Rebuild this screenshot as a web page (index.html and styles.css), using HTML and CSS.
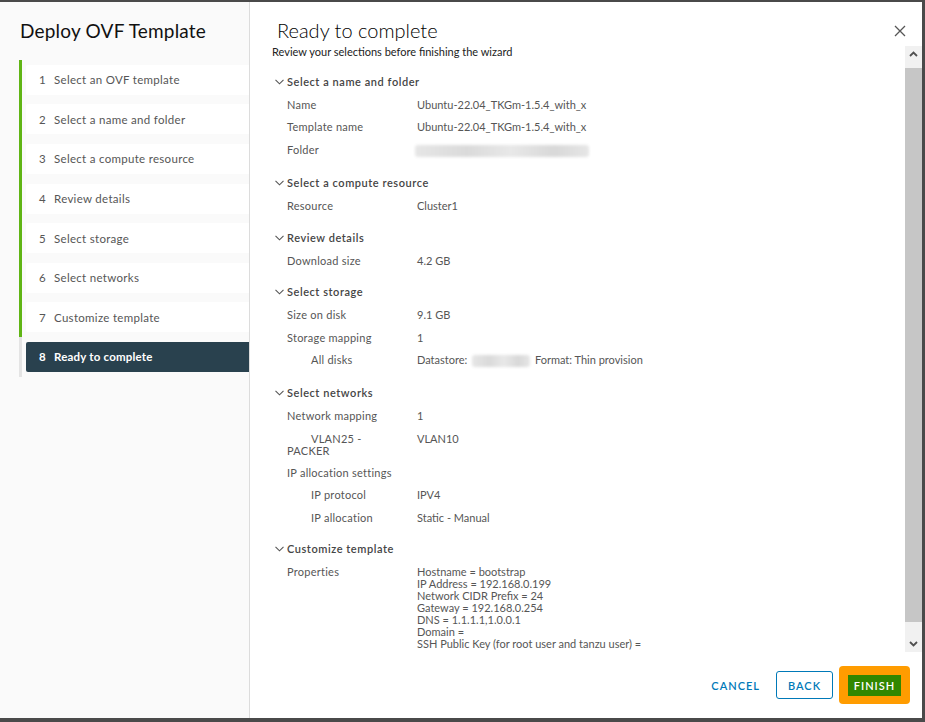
FILE: index.html
```html
<!DOCTYPE html>
<html>
<head>
<meta charset="utf-8">
<link rel="stylesheet" href="styles.css">
</head>
<body>
<div class="dialog">
  <aside class="sidebar">
    <h1 class="side-title">Deploy OVF Template</h1>
    <ol class="steps">
      <li class="step done"><div class="step-box"><span class="num">1</span>Select an OVF template</div></li>
      <li class="step done"><div class="step-box"><span class="num">2</span>Select a name and folder</div></li>
      <li class="step done"><div class="step-box"><span class="num">3</span>Select a compute resource</div></li>
      <li class="step done"><div class="step-box"><span class="num">4</span>Review details</div></li>
      <li class="step done"><div class="step-box"><span class="num">5</span>Select storage</div></li>
      <li class="step done"><div class="step-box"><span class="num">6</span>Select networks</div></li>
      <li class="step done"><div class="step-box"><span class="num">7</span>Customize template</div></li>
      <li class="step current"><div class="step-box active"><span class="num">8</span>Ready to complete</div></li>
    </ol>
  </aside>
  <main class="panel">
    <header class="panel-head">
      <h2 class="panel-title">Ready to complete</h2>
      <button class="close" aria-label="Close">
        <svg width="12" height="12" viewBox="0 0 12 12"><path d="M1 1 L11 11 M11 1 L1 11" stroke="#565656" stroke-width="1.3" fill="none"/></svg>
      </button>
    </header>
    <div class="panel-body">
      <div class="content">
        <p class="subtitle">Review your selections before finishing the wizard</p>

        <section class="sec">
          <div class="sec-head"><svg class="chev" width="9" height="6" viewBox="0 0 9 6"><path d="M0.5 0.8 L4.5 4.8 L8.5 0.8" stroke="#565656" stroke-width="1.1" fill="none"/></svg>Select a name and folder</div>
          <div class="row"><span class="lbl">Name</span><span class="val">Ubuntu-22.04_TKGm-1.5.4_with_x</span></div>
          <div class="row"><span class="lbl">Template name</span><span class="val">Ubuntu-22.04_TKGm-1.5.4_with_x</span></div>
          <div class="row"><span class="lbl">Folder</span><span class="val"><span class="blur blur-folder"></span></span></div>
        </section>

        <section class="sec">
          <div class="sec-head"><svg class="chev" width="9" height="6" viewBox="0 0 9 6"><path d="M0.5 0.8 L4.5 4.8 L8.5 0.8" stroke="#565656" stroke-width="1.1" fill="none"/></svg>Select a compute resource</div>
          <div class="row"><span class="lbl">Resource</span><span class="val">Cluster1</span></div>
        </section>

        <section class="sec">
          <div class="sec-head"><svg class="chev" width="9" height="6" viewBox="0 0 9 6"><path d="M0.5 0.8 L4.5 4.8 L8.5 0.8" stroke="#565656" stroke-width="1.1" fill="none"/></svg>Review details</div>
          <div class="row"><span class="lbl">Download size</span><span class="val">4.2 GB</span></div>
        </section>

        <section class="sec">
          <div class="sec-head"><svg class="chev" width="9" height="6" viewBox="0 0 9 6"><path d="M0.5 0.8 L4.5 4.8 L8.5 0.8" stroke="#565656" stroke-width="1.1" fill="none"/></svg>Select storage</div>
          <div class="row"><span class="lbl">Size on disk</span><span class="val">9.1 GB</span></div>
          <div class="row"><span class="lbl">Storage mapping</span><span class="val">1</span></div>
          <div class="row"><span class="lbl sub">All disks</span><span class="val">Datastore: <span class="blur blur-ds"></span> Format: Thin provision</span></div>
        </section>

        <section class="sec">
          <div class="sec-head"><svg class="chev" width="9" height="6" viewBox="0 0 9 6"><path d="M0.5 0.8 L4.5 4.8 L8.5 0.8" stroke="#565656" stroke-width="1.1" fill="none"/></svg>Select networks</div>
          <div class="row"><span class="lbl">Network mapping</span><span class="val">1</span></div>
          <div class="row"><span class="lbl sub">VLAN25 -<br>PACKER</span><span class="val">VLAN10</span></div>
          <div class="row"><span class="lbl wide">IP allocation settings</span></div>
          <div class="row"><span class="lbl sub">IP protocol</span><span class="val">IPV4</span></div>
          <div class="row"><span class="lbl sub">IP allocation</span><span class="val">Static - Manual</span></div>
        </section>

        <section class="sec">
          <div class="sec-head"><svg class="chev" width="9" height="6" viewBox="0 0 9 6"><path d="M0.5 0.8 L4.5 4.8 L8.5 0.8" stroke="#565656" stroke-width="1.1" fill="none"/></svg>Customize template</div>
          <div class="row"><span class="lbl">Properties</span><span class="val">Hostname = bootstrap<br>IP Address = 192.168.0.199<br>Network CIDR Prefix = 24<br>Gateway = 192.168.0.254<br>DNS = 1.1.1.1,1.0.0.1<br>Domain =<br>SSH Public Key (for root user and tanzu user) =</span></div>
        </section>
      </div>
      <div class="scrollbar">
        <div class="sb-btn"><svg width="9" height="6" viewBox="0 0 9 6"><path d="M1 5 L4.5 1.5 L8 5" stroke="#505050" stroke-width="1.8" fill="none"/></svg></div>
        <div class="sb-track"><div class="sb-thumb"></div></div>
        <div class="sb-btn"><svg width="9" height="6" viewBox="0 0 9 6"><path d="M1 1 L4.5 4.5 L8 1" stroke="#505050" stroke-width="1.8" fill="none"/></svg></div>
      </div>
    </div>
    <footer class="panel-foot">
      <button class="btn btn-flat">Cancel</button>
      <button class="btn btn-outline">Back</button>
      <span class="focus-ring"><button class="btn btn-success">Finish</button></span>
    </footer>
  </main>
</div>
</body>
</html>
```
FILE: styles.css
```css
* { box-sizing: border-box; }
html, body { margin: 0; padding: 0; }
body {
  background: #4a4a4a;
  width: 925px;
  height: 722px;
  overflow: hidden;
  font-family: Lato, "Noto Sans", sans-serif;
}
.dialog {
  margin-top: 2px;
  width: 922px;
  height: 716px;
  background: #fff;
  display: flex;
}
.sidebar {
  width: 250px;
  flex: none;
  background: #fafafa;
  border-right: 1px solid #dcdcdc;
}
.side-title {
  margin: 0;
  padding: 17px 0 0 20px;
  font-size: 19px;
  line-height: 24px;
  font-weight: 400;
  letter-spacing: 0.2px;
  color: #111;
}
.steps {
  list-style: none;
  margin: 17px 0 0 19px;
  padding: 0;
}
.step {
  border-left: 3px solid #60b515;
  padding: 4.8px 0 4.8px 4px;
}
.step.current { border-left-color: #e4e4e4; }
.step-box {
  height: 30px;
  background: #fff;
  display: flex;
  align-items: center;
  padding-left: 13px;
  font-size: 11.5px;
  letter-spacing: 0.3px;
  color: #565656;
  border-radius: 2px 0 0 2px;
}
.step-box .num { width: 15px; flex: none; }
.step-box.active {
  background: #29414e;
  color: #fff;
  font-weight: 700;
  letter-spacing: 0.2px;
}
.panel {
  flex: 1;
  display: flex;
  flex-direction: column;
  min-width: 0;
}
.panel-head {
  height: 42px;
  display: flex;
  align-items: flex-start;
  justify-content: space-between;
  flex: none;
}
.panel-title {
  margin: 16px 0 0 27px;
  font-size: 20px;
  line-height: 24px;
  font-weight: 300;
  color: #000;
}
.close {
  margin: 23px 16px 0 0;
  padding: 0;
  border: 0;
  background: none;
  width: 12px;
  height: 12px;
  display: flex;
}
.panel-body {
  height: 608px;
  display: flex;
  flex: none;
}
.content {
  flex: 1;
  overflow: hidden;
  font-size: 11px;
  color: #565656;
}
.subtitle {
  margin: 1px 0 0 22px;
  font-size: 11px;
  line-height: 14px;
  color: #222;
}
.sec { margin: 0 0 0 25px; padding-bottom: 9.4px; display: flow-root; }
.sec:first-of-type { margin-top: 17px; }
.sec-head {
  display: flex;
  align-items: center;
  height: 12px;
  line-height: 12px;
  margin-bottom: 11px;
  font-weight: 600;
  color: #454545;
  letter-spacing: 0.55px;
}
.chev { margin-right: 3px; flex: none; }
.row {
  display: flex;
  line-height: 12px;
  margin: 0 0 10.4px 12px;
}
.lbl { width: 130px; flex: none; letter-spacing: 0.25px; }
.lbl.sub { text-indent: 24px; }
.lbl.wide { width: auto; }
.val { flex: 1; }
.blur {
  display: inline-block;
  vertical-align: middle;
  height: 12px;
  background: linear-gradient(90deg, #e6e6e6, #dadada 30%, #e8e8e8 55%, #d8d8d8 80%, #e6e6e6);
  filter: blur(1.5px);
  border-radius: 3px;
}
.blur-folder { width: 174px; margin-left: -2px; }
.blur-ds { width: 58px; margin: 0 2px; }
.scrollbar {
  width: 17px;
  flex: none;
  margin-top: 2px;
  background: #f1f1f1;
  display: flex;
  flex-direction: column;
}
.sb-btn {
  height: 16px;
  display: flex;
  align-items: center;
  justify-content: center;
  flex: none;
}
.sb-track {
  flex: 1;
  padding: 6px 0 14px;
  display: flex;
}
.sb-thumb {
  flex: 1;
  background: #c6c6c6;
}
.panel-foot {
  flex: 1;
  display: flex;
  align-items: center;
  justify-content: flex-end;
  padding-right: 12px;
}
.btn {
  font-family: Lato, "Noto Sans", sans-serif;
  font-size: 11px;
  font-weight: 600;
  letter-spacing: 1px;
  text-transform: uppercase;
  border-radius: 3px;
  cursor: pointer;
}
.btn-flat {
  border: 0;
  background: none;
  color: #0079b8;
  height: 28px;
  padding: 0 12px;
  margin-right: 4px;
}
.btn-outline {
  border: 1px solid #0079b8;
  background: #fff;
  color: #0079b8;
  height: 28px;
  width: 57px;
  padding: 0;
  margin-right: 6px;
}
.focus-ring {
  display: flex;
  background: #ff9c00;
  border-radius: 4px;
  padding: 9px 9px 8px 9px;
}
.btn-success {
  border: 0;
  background: #318700;
  color: #fff;
  height: 21px;
  width: 53px;
  padding: 0;
  border-radius: 0;
}
```
